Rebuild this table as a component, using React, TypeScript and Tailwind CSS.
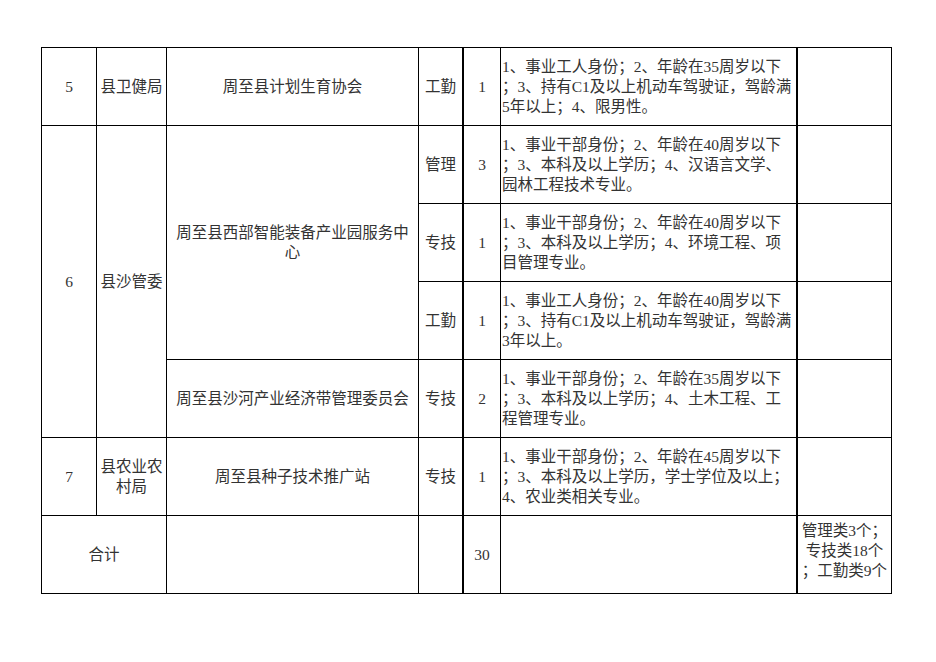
import React from 'react';

interface Cell {
  lines: string[];
  className?: string;
  align?: 'center' | 'left';
}

const font = { fontFamily: '"Liberation Serif", "Noto Sans CJK SC", serif' };

// column borders: thick after the "type" and "requirement" columns
const thin = 'border-r border-b border-black';
const thickR = 'border-r-2 border-b border-black';

const TextCell: React.FC<Cell> = ({ lines, className = '', align = 'center' }) => (
  <div
    className={`flex flex-col justify-center ${align === 'center' ? 'items-center text-center' : 'items-start pl-[1px]'} ${className}`}
  >
    {lines.map((line, i) => (
      <div key={i} className="whitespace-nowrap leading-[20px]">
        {line}
      </div>
    ))}
  </div>
);

export default function App() {
  const reqs = {
    r1: ['1、事业工人身份；2、年龄在35周岁以下', '；3、持有C1及以上机动车驾驶证，驾龄满', '5年以上；4、限男性。'],
    r2: ['1、事业干部身份；2、年龄在40周岁以下', '；3、本科及以上学历；4、汉语言文学、', '园林工程技术专业。'],
    r3: ['1、事业干部身份；2、年龄在40周岁以下', '；3、本科及以上学历；4、环境工程、项', '目管理专业。'],
    r4: ['1、事业工人身份；2、年龄在40周岁以下', '；3、持有C1及以上机动车驾驶证，驾龄满', '3年以上。'],
    r5: ['1、事业干部身份；2、年龄在35周岁以下', '；3、本科及以上学历；4、土木工程、工', '程管理专业。'],
    r6: ['1、事业干部身份；2、年龄在45周岁以下', '；3、本科及以上学历，学士学位及以上；', '4、农业类相关专业。'],
  };

  return (
    <div className="w-[936px] h-[662px] bg-white pt-[47px] pl-[41px] text-[15.5px] text-[#333]" style={font}>
      <div className="grid grid-cols-[55px_70px_252px_45px_37px_297px_94px] grid-rows-[repeat(7,78px)] w-[851px] border-l border-t border-black">
        {/* 5 */}
        <TextCell lines={['5']} className={thin} />
        <TextCell lines={['县卫健局']} className={thin} />
        <TextCell lines={['周至县计划生育协会']} className={thin} />
        <TextCell lines={['工勤']} className={thickR} />
        <TextCell lines={['1']} className={thin} />
        <TextCell lines={reqs.r1} align="left" className={thickR} />
        <div className={thin} />

        {/* 6 */}
        <TextCell lines={['6']} className={`${thin} row-span-4`} />
        <TextCell lines={['县沙管委']} className={`${thin} row-span-4`} />
        <TextCell lines={['周至县西部智能装备产业园服务中', '心']} className={`${thin} row-span-3`} />
        <TextCell lines={['管理']} className={thickR} />
        <TextCell lines={['3']} className={thin} />
        <TextCell lines={reqs.r2} align="left" className={thickR} />
        <div className={thin} />

        <TextCell lines={['专技']} className={thickR} />
        <TextCell lines={['1']} className={thin} />
        <TextCell lines={reqs.r3} align="left" className={thickR} />
        <div className={thin} />

        <TextCell lines={['工勤']} className={thickR} />
        <TextCell lines={['1']} className={thin} />
        <TextCell lines={reqs.r4} align="left" className={thickR} />
        <div className={thin} />

        <TextCell lines={['周至县沙河产业经济带管理委员会']} className={thin} />
        <TextCell lines={['专技']} className={thickR} />
        <TextCell lines={['2']} className={thin} />
        <TextCell lines={reqs.r5} align="left" className={thickR} />
        <div className={thin} />

        {/* 7 */}
        <TextCell lines={['7']} className={thin} />
        <TextCell lines={['县农业农', '村局']} className={thin} />
        <TextCell lines={['周至县种子技术推广站']} className={thin} />
        <TextCell lines={['专技']} className={thickR} />
        <TextCell lines={['1']} className={thin} />
        <TextCell lines={reqs.r6} align="left" className={thickR} />
        <div className={thin} />

        {/* total */}
        <TextCell lines={['合计']} className={`${thin} col-span-2`} />
        <div className={thin} />
        <div className={thickR} />
        <TextCell lines={['30']} className={thin} />
        <div className={thickR} />
        <TextCell lines={['管理类3个；', '专技类18个', '；工勤类9个']} className={`${thin} pb-[8px]`} />
      </div>
    </div>
  );
}
